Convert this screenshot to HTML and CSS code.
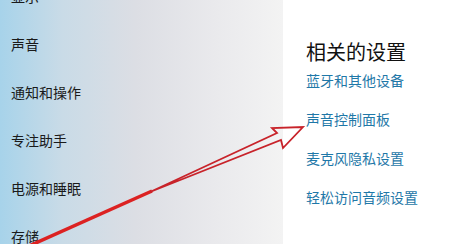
FILE: index.html
```html
<!DOCTYPE html>
<html>
<head>
  <title>声音设置</title>
  <link rel="stylesheet" href="styles.css">
</head>
<body>

  <div id="page">
    <!-- Left navigation -->
    <div id="navPane">
      <div class="navItem cut">显示</div>
      <div class="navItem">声音</div>
      <div class="navItem">通知和操作</div>
      <div class="navItem">专注助手</div>
      <div class="navItem">电源和睡眠</div>
      <div class="navItem">存储</div>
    </div>

    <!-- Related settings -->
    <div id="contentPane">
      <h3 class="related-title">相关的设置</h3>
      <a class="related-link">蓝牙和其他设备</a>
      <a class="related-link">声音控制面板</a>
      <a class="related-link">麦克风隐私设置</a>
      <a class="related-link">轻松访问音频设置</a>
    </div>
  </div>

  <!-- Red annotation arrow -->
  <svg id="arrow" width="470" height="244" viewBox="0 0 470 244">
    <line x1="152" y1="191" x2="20" y2="250" stroke="#dc2222" stroke-width="3.5"/>
    <polygon points="150,192 277,133 272,128 303,127 283,148 281,140"
      fill="none" stroke="#c8232a" stroke-width="1.8" stroke-linejoin="miter"/>
  </svg>

</body>
</html>
```

FILE: styles.css
```css
body {
  margin: 0;
  width: 470px;
  height: 244px;
  overflow: hidden;
  font-family: "Noto Sans CJK SC", "Noto Sans", sans-serif;
}

#page {
  display: flex;
  height: 244px;
}

#navPane {
  width: 283px;
  flex-shrink: 0;
  background: linear-gradient(to right, #a7d3ea 0%, #c9dbe7 22%, #dcdee4 48%, #e9e9ec 75%, #f3f3f3 100%);
  padding-left: 11px;
  box-sizing: border-box;
  height: 244px;
  overflow: hidden;
}

.navItem {
  height: 48px;
  line-height: 48px;
  font-size: 14px;
  color: #1a1a1a;
}

.navItem.cut {
  margin-top: -28px;
}

#contentPane {
  flex: 1;
  background: #fff;
  padding: 38px 0 0 23px;
}

.related-title {
  margin: 0 0 -5px 0;
  font-size: 20px;
  font-weight: normal;
  line-height: 28px;
  color: #111;
}

.related-link {
  display: block;
  font-size: 14px;
  line-height: 39px;
  color: #1f78a8;
}

#arrow {
  position: absolute;
  left: 0;
  top: 0;
}
```
